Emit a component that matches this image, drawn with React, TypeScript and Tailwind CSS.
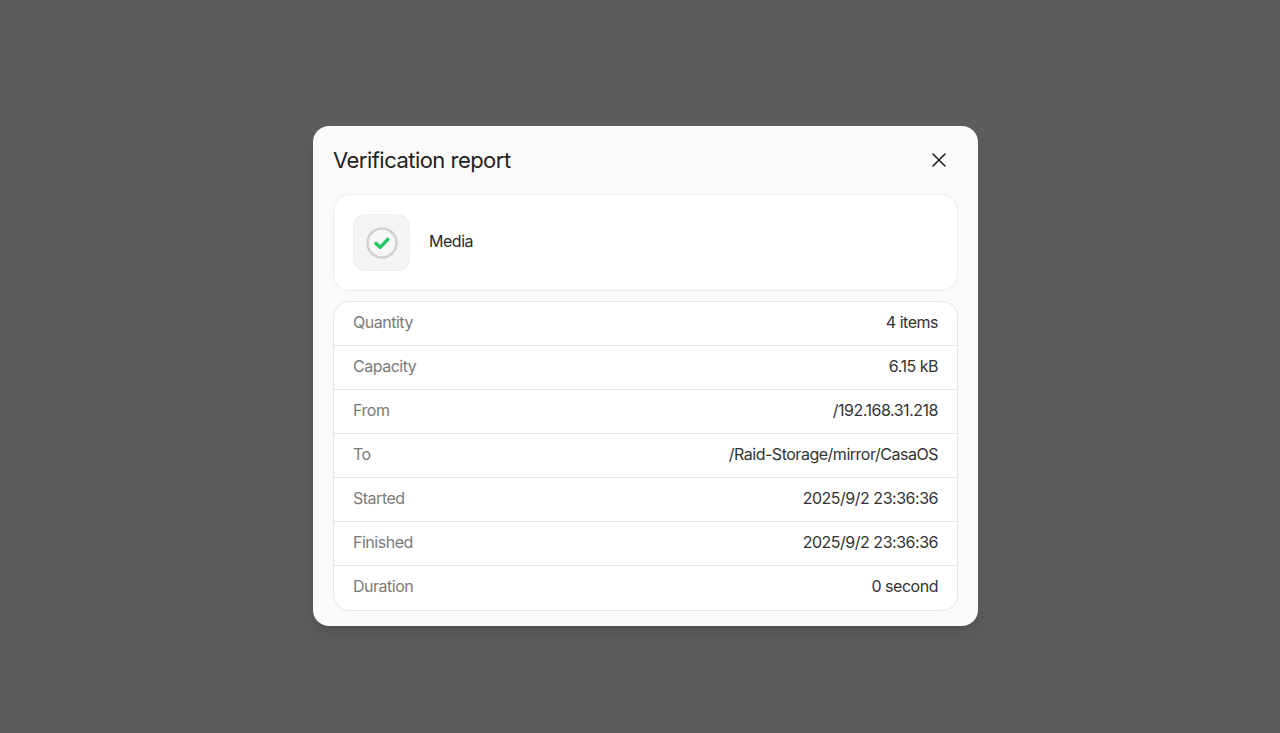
const rows = [
  ['Quantity', '4 items'],
  ['Capacity', '6.15 kB'],
  ['From', '/192.168.31.218'],
  ['To', '/Raid-Storage/mirror/CasaOS'],
  ['Started', '2025/9/2 23:36:36'],
  ['Finished', '2025/9/2 23:36:36'],
  ['Duration', '0 second'],
];

function CheckIcon() {
  return (
    <svg width="32" height="32" viewBox="0 0 32 32" fill="none">
      <circle cx="16" cy="16" r="14.5" stroke="#d2d2d2" strokeWidth="2.6" fill="#f7f7f7" />
      <path d="M10 16.5l4.2 3.8 7.6-8" stroke="#22c55e" strokeWidth="3.4" strokeLinecap="round" strokeLinejoin="round" />
    </svg>
  );
}

export default function App() {
  return (
    <div className="flex h-[733px] w-full items-center justify-center bg-[#5c5c5c] pl-[11px] pt-[19px] font-['Inter',sans-serif]">
      <div className="flex h-[500px] w-[665px] flex-col rounded-2xl bg-[#fafafa] px-5 pb-4 shadow-lg">
        <div className="flex h-[68px] shrink-0 items-center justify-between">
          <h1 className="text-[22px] font-normal tracking-[-0.024em] text-[#222222]">Verification report</h1>
          <button className="mr-[7px] flex h-6 w-6 items-center justify-center text-[#222222]">
            <svg width="16" height="16" viewBox="0 0 16 16" fill="none" stroke="currentColor" strokeWidth="1.6" strokeLinecap="round">
              <path d="M2 2l12 12M14 2L2 14" />
            </svg>
          </button>
        </div>

        <div className="flex h-[97px] shrink-0 items-center gap-[19px] rounded-2xl border border-[#ebebee] bg-white px-[19px]">
          <div className="flex h-[57px] w-[57px] items-center justify-center rounded-xl border border-[#efefef] bg-[#f4f4f4]">
            <CheckIcon />
          </div>
          <span className="pb-[3px] text-base tracking-[-0.03em] text-[#2a2a2a]">Media</span>
        </div>

        <div className="mt-[10px] flex flex-col divide-y divide-[#e6e6ea] rounded-2xl border border-[#e6e6ea] bg-white">
          {rows.map(([label, value]) => (
            <div key={label} className="flex h-[44px] items-center justify-between px-[19px] pb-[4px] text-base tracking-[-0.03em]">
              <span className="text-[#7a7a7a]">{label}</span>
              <span className="text-[#333333]">{value}</span>
            </div>
          ))}
        </div>
      </div>
    </div>
  );
}
